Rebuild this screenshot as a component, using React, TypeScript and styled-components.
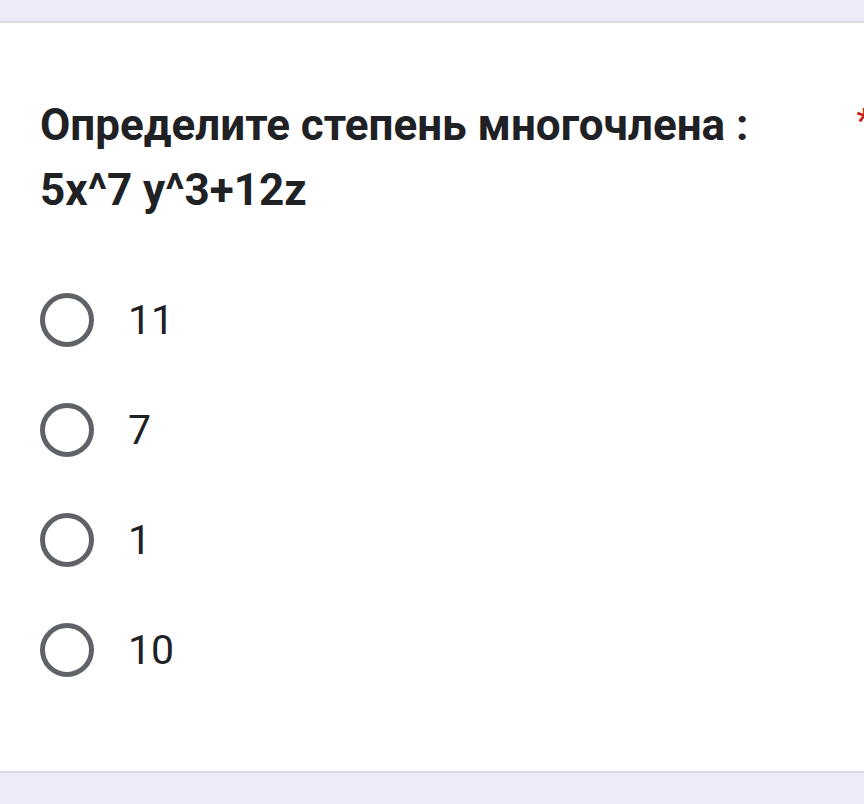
import React from 'react'
import styled, { createGlobalStyle } from 'styled-components'

const GlobalStyle = createGlobalStyle`
  html, body {
    margin: 0;
    padding: 0;
    background: #eeeaf8;
    font-family: Roboto, "Noto Sans", sans-serif;
    overflow: hidden;
  }
`

const Page = styled.div`
  width: 864px;
  height: 804px;
  padding-top: 21px;
  box-sizing: border-box;
`

const Card = styled.div`
  background: #ffffff;
  border-top: 2px solid #dcdae1;
  border-bottom: 2px solid #dcdae1;
  height: 752px;
  box-sizing: border-box;
  overflow: hidden;
  padding: 70px 0 0 40px;
`

const Header = styled.div`
  display: flex;
  justify-content: space-between;
  align-items: flex-start;
  margin-right: -8px;
`

const Title = styled.div`
  font-weight: 700;
  font-size: 44px;
  line-height: 65px;
  color: #202124;
  letter-spacing: 0;
`

const Required = styled.span`
  color: #c5221f;
  font-size: 34px;
  font-weight: 700;
  line-height: 34px;
  padding-top: 10px;
`

const Options = styled.div`
  display: flex;
  flex-direction: column;
  gap: 56px;
  margin-top: 70px;
`

const Option = styled.label`
  display: flex;
  align-items: center;
  gap: 34px;
  height: 54px;
  cursor: pointer;
`

const Radio = styled.span`
  width: 54px;
  height: 54px;
  box-sizing: border-box;
  border: 5px solid #5f6368;
  border-radius: 50%;
  flex-shrink: 0;
`

const OptionText = styled.span`
  font-size: 41px;
  color: #202124;
  line-height: 54px;
`

const options = ['11', '7', '1', '10']

const App: React.FC = () => {
  return (
    <Page>
      <GlobalStyle />
      <Card>
        <Header>
          <Title>
            Определите степень многочлена :
            <br />
            5x^7 y^3+12z
          </Title>
          <Required>*</Required>
        </Header>
        <Options>
          {options.map((o) => (
            <Option key={o}>
              <Radio />
              <OptionText>{o}</OptionText>
            </Option>
          ))}
        </Options>
      </Card>
    </Page>
  )
}

export default App
